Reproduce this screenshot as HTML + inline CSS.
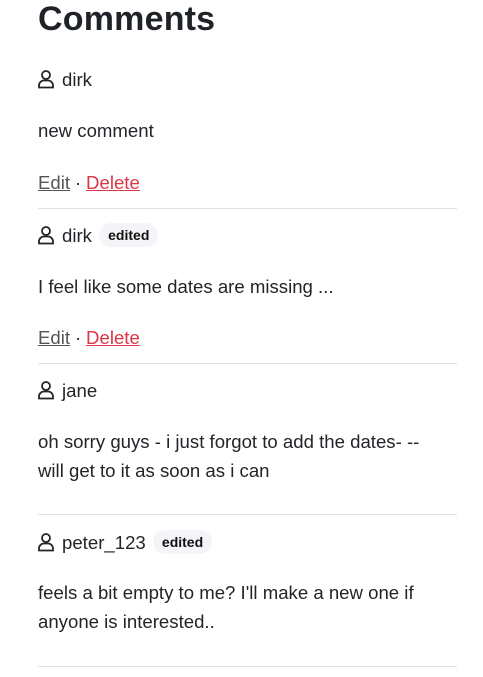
<!DOCTYPE html>
<html><head><meta charset="utf-8"><style>
body{margin:0;width:483px;height:677px;background:#fff;font-family:"Liberation Sans",sans-serif;color:#212529;position:relative;overflow:hidden}
.a{position:absolute;left:38px;font-size:18.6px;line-height:29px;white-space:nowrap}
h1{position:absolute;left:38px;top:0px;margin:0;font-size:34px;font-weight:bold;letter-spacing:0.2px;color:#1f2328}
.u svg{position:absolute;left:0;top:5px}
.u span.n{margin-left:24px}
.b{display:inline-block;font-size:14px;font-weight:bold;background:#f3f5f8;border-radius:12px;padding:3px 9px;line-height:18px;margin-left:2px;vertical-align:2px;color:#111}
hr{position:absolute;left:38px;width:419px;margin:0;border:0;border-top:1px solid #dee2e6}
.e{color:#555;text-decoration:underline}.d{color:#dc3545;text-decoration:underline}
.dot{display:inline-block;width:16px;text-align:center}
</style></head><body>
<h1>Comments</h1>
<svg width="0" height="0" style="position:absolute"><defs><g id="ic" fill="none" stroke="#212529" stroke-width="1.8"><circle cx="8" cy="5" r="4"/><path d="M1 17.5 V15.5 a5 5 0 0 1 5-5 h4 a5 5 0 0 1 5 5 V17.5 Z"/></g></defs></svg>
<div class="a u" style="top:65px"><svg width="17" height="19"><use href="#ic"/></svg><span class="n">dirk</span></div>
<div class="a" style="top:116px">new comment</div>
<div class="a" style="top:168px"><span class="e">Edit</span><span class="dot">·</span><span class="d">Delete</span></div>
<hr style="top:208px">
<div class="a u" style="top:221px"><svg width="17" height="19"><use href="#ic"/></svg><span class="n">dirk</span> <span class="b">edited</span></div>
<div class="a" style="top:272px">I feel like some dates are missing ...</div>
<div class="a" style="top:323px"><span class="e">Edit</span><span class="dot">·</span><span class="d">Delete</span></div>
<hr style="top:363px">
<div class="a u" style="top:376px"><svg width="17" height="19"><use href="#ic"/></svg><span class="n">jane</span></div>
<div class="a" style="top:427px">oh sorry guys - i just forgot to add the dates- --<br>will get to it as soon as i can</div>
<hr style="top:514px">
<div class="a u" style="top:528px"><svg width="17" height="19"><use href="#ic"/></svg><span class="n">peter_123</span> <span class="b">edited</span></div>
<div class="a" style="top:578px">feels a bit empty to me? I'll make a new one if<br>anyone is interested..</div>
<hr style="top:666px">
</body></html>
